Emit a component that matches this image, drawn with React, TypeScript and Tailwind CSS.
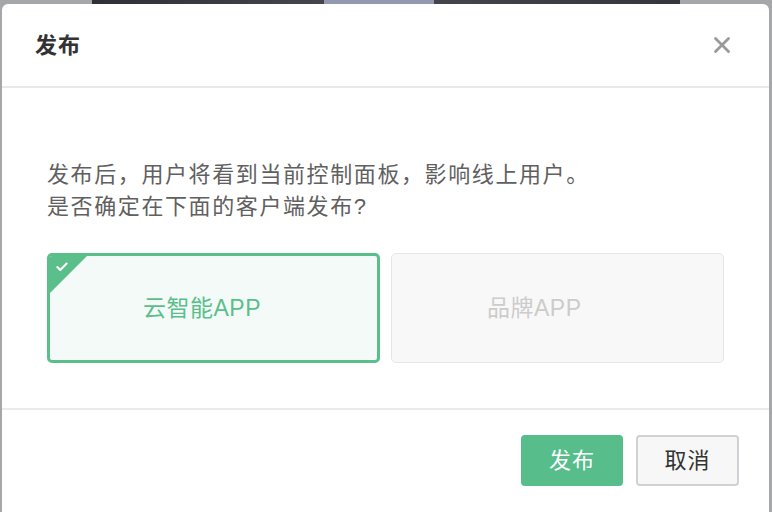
import { X, Check } from "lucide-react";

const cjk = "font-['Liberation_Sans','Noto_Sans_CJK_SC',sans-serif]";

interface ClientCardProps {
  label: string;
  active?: boolean;
}

function ClientCard({ label, active }: ClientCardProps) {
  if (active) {
    return (
      <div className="relative h-[110px] rounded-[5px] border-[3px] border-[#5bbf8c] bg-[#f4faf8] flex items-center pl-[93px] overflow-hidden">
        <div className="absolute left-0 top-0 w-0 h-0 border-t-[37px] border-r-[37px] border-t-[#5bbf8c] border-r-transparent" />
        <Check className="absolute left-[5px] top-[4px] w-[14px] h-[14px] text-white" strokeWidth={3.5} />
        <span className="text-[23px] tracking-[0.5px] text-[#5bbf8c]">{label}</span>
      </div>
    );
  }
  return (
    <div className="h-[110px] rounded-[5px] border border-[#e6e6e6] bg-[#f8f8f8] flex items-center pl-[95px]">
      <span className="text-[23px] tracking-[0.5px] text-[#cccccc]">{label}</span>
    </div>
  );
}

export default function App() {
  return (
    <div className={`w-[772px] h-[512px] overflow-hidden bg-[#a6a7a9] ${cjk}`}>
      {/* backdrop peeking above the dialog */}
      <div className="flex h-[4px]">
        <div className="w-[92px]" />
        <div className="w-[232px] bg-gradient-to-r from-[#2f3036] to-[#45464d]" />
        <div className="w-[110px] bg-[#9298ad]" />
        <div className="w-[246px] bg-gradient-to-r from-[#44454c] to-[#35363b]" />
      </div>

      <div className="ml-[2px] w-[767px] h-[520px] rounded-t-[6px] bg-white flex flex-col">
        <header className="h-[84px] flex items-center justify-between pl-[33px] pr-[34px] border-b-2 border-[#e9e9e9]">
          <h1 className="text-[22px] font-bold tracking-[1px] text-[#333333]">发布</h1>
          <X className="w-[26px] h-[26px] text-[#9a9a9a]" strokeWidth={2.6} />
        </header>

        <section className="px-[45px] pt-[71px] pb-[45px] border-b-2 border-[#ebebeb]">
          <p className="text-[22px] leading-[32px] tracking-[1.6px] text-[#606060]">
            发布后，用户将看到当前控制面板，影响线上用户。
            <br />
            是否确定在下面的客户端发布?
          </p>
          <div className="mt-[30px] grid grid-cols-2 gap-[11px]">
            <ClientCard label="云智能APP" active />
            <ClientCard label="品牌APP" />
          </div>
        </section>

        <footer className="flex justify-end gap-[13px] pt-[25px] pr-[30px]">
          <button className="w-[102px] h-[51px] rounded-[4px] bg-[#56bd8b] text-white text-[22px] tracking-[1px]">
            发布
          </button>
          <button className="w-[103px] h-[51px] rounded-[4px] border-2 border-[#d0d1d4] bg-[#f7f7f7] text-[#333333] text-[22px] tracking-[1px]">
            取消
          </button>
        </footer>
      </div>
    </div>
  );
}
